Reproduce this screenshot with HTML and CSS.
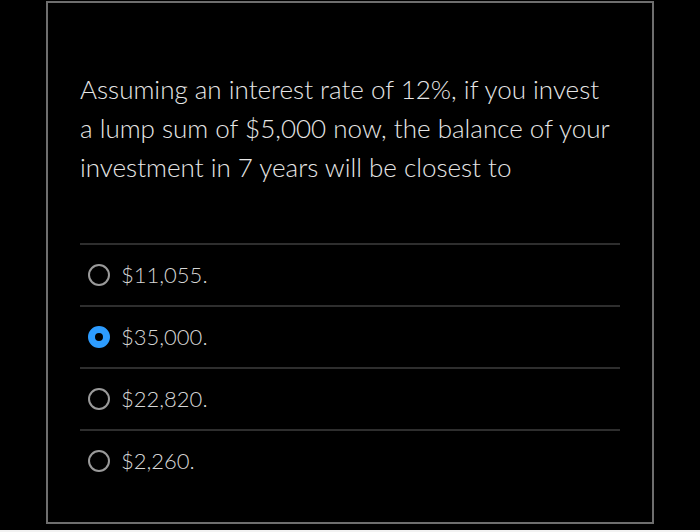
FILE: index.html
```html
<!DOCTYPE html>
<html lang="en">
<head>
<meta charset="utf-8">
<title>Question</title>
<link rel="stylesheet" href="styles.css">
</head>
<body>
<div class="page">
  <div class="card">
    <p class="question">Assuming an interest rate of 12%, if you invest a lump sum of $5,000 now, the balance of your investment in 7 years will be closest to</p>
    <ul class="options">
      <li class="option"><span class="radio"></span><span class="label">$11,055.</span></li>
      <li class="option"><span class="radio radio-on"></span><span class="label">$35,000.</span></li>
      <li class="option"><span class="radio"></span><span class="label">$22,820.</span></li>
      <li class="option"><span class="radio"></span><span class="label">$2,260.</span></li>
    </ul>
  </div>
</div>
</body>
</html>
```

FILE: styles.css
```css
html {
  margin: 0;
  background: #f2f2f2;
}
body {
  margin: 0;
  background: #f2f2f2;
  font-family: "Lato", "Liberation Sans", sans-serif;
  font-weight: 300;
}
.page {
  height: 530px;
  background: #000;
  padding-top: 1px;
  box-sizing: border-box;
}
.card {
  margin-left: 46px;
  width: 608px;
  height: 523px;
  box-sizing: border-box;
  border: 2px solid #6e6e6e;
  padding: 67px 32px 0 32px;
}
.question {
  margin: 0;
  width: 535px;
  color: #e6e6e6;
  font-size: 26px;
  line-height: 39px;
}
.options {
  list-style: none;
  margin: 56px 0 0 0;
  padding: 0;
}
.option {
  display: flex;
  align-items: center;
  gap: 11px;
  height: 62px;
  box-sizing: border-box;
  border-top: 2px solid #2e2e2e;
  padding-left: 8px;
  padding-bottom: 1px;
}
.radio {
  width: 22px;
  height: 22px;
  box-sizing: border-box;
  border: 2px solid #9a9a9a;
  border-radius: 50%;
}
.radio-on {
  border: 7px solid #2d9cff;
  background: #000;
}
.label {
  color: #d6d6d6;
  font-size: 22px;
}
```
